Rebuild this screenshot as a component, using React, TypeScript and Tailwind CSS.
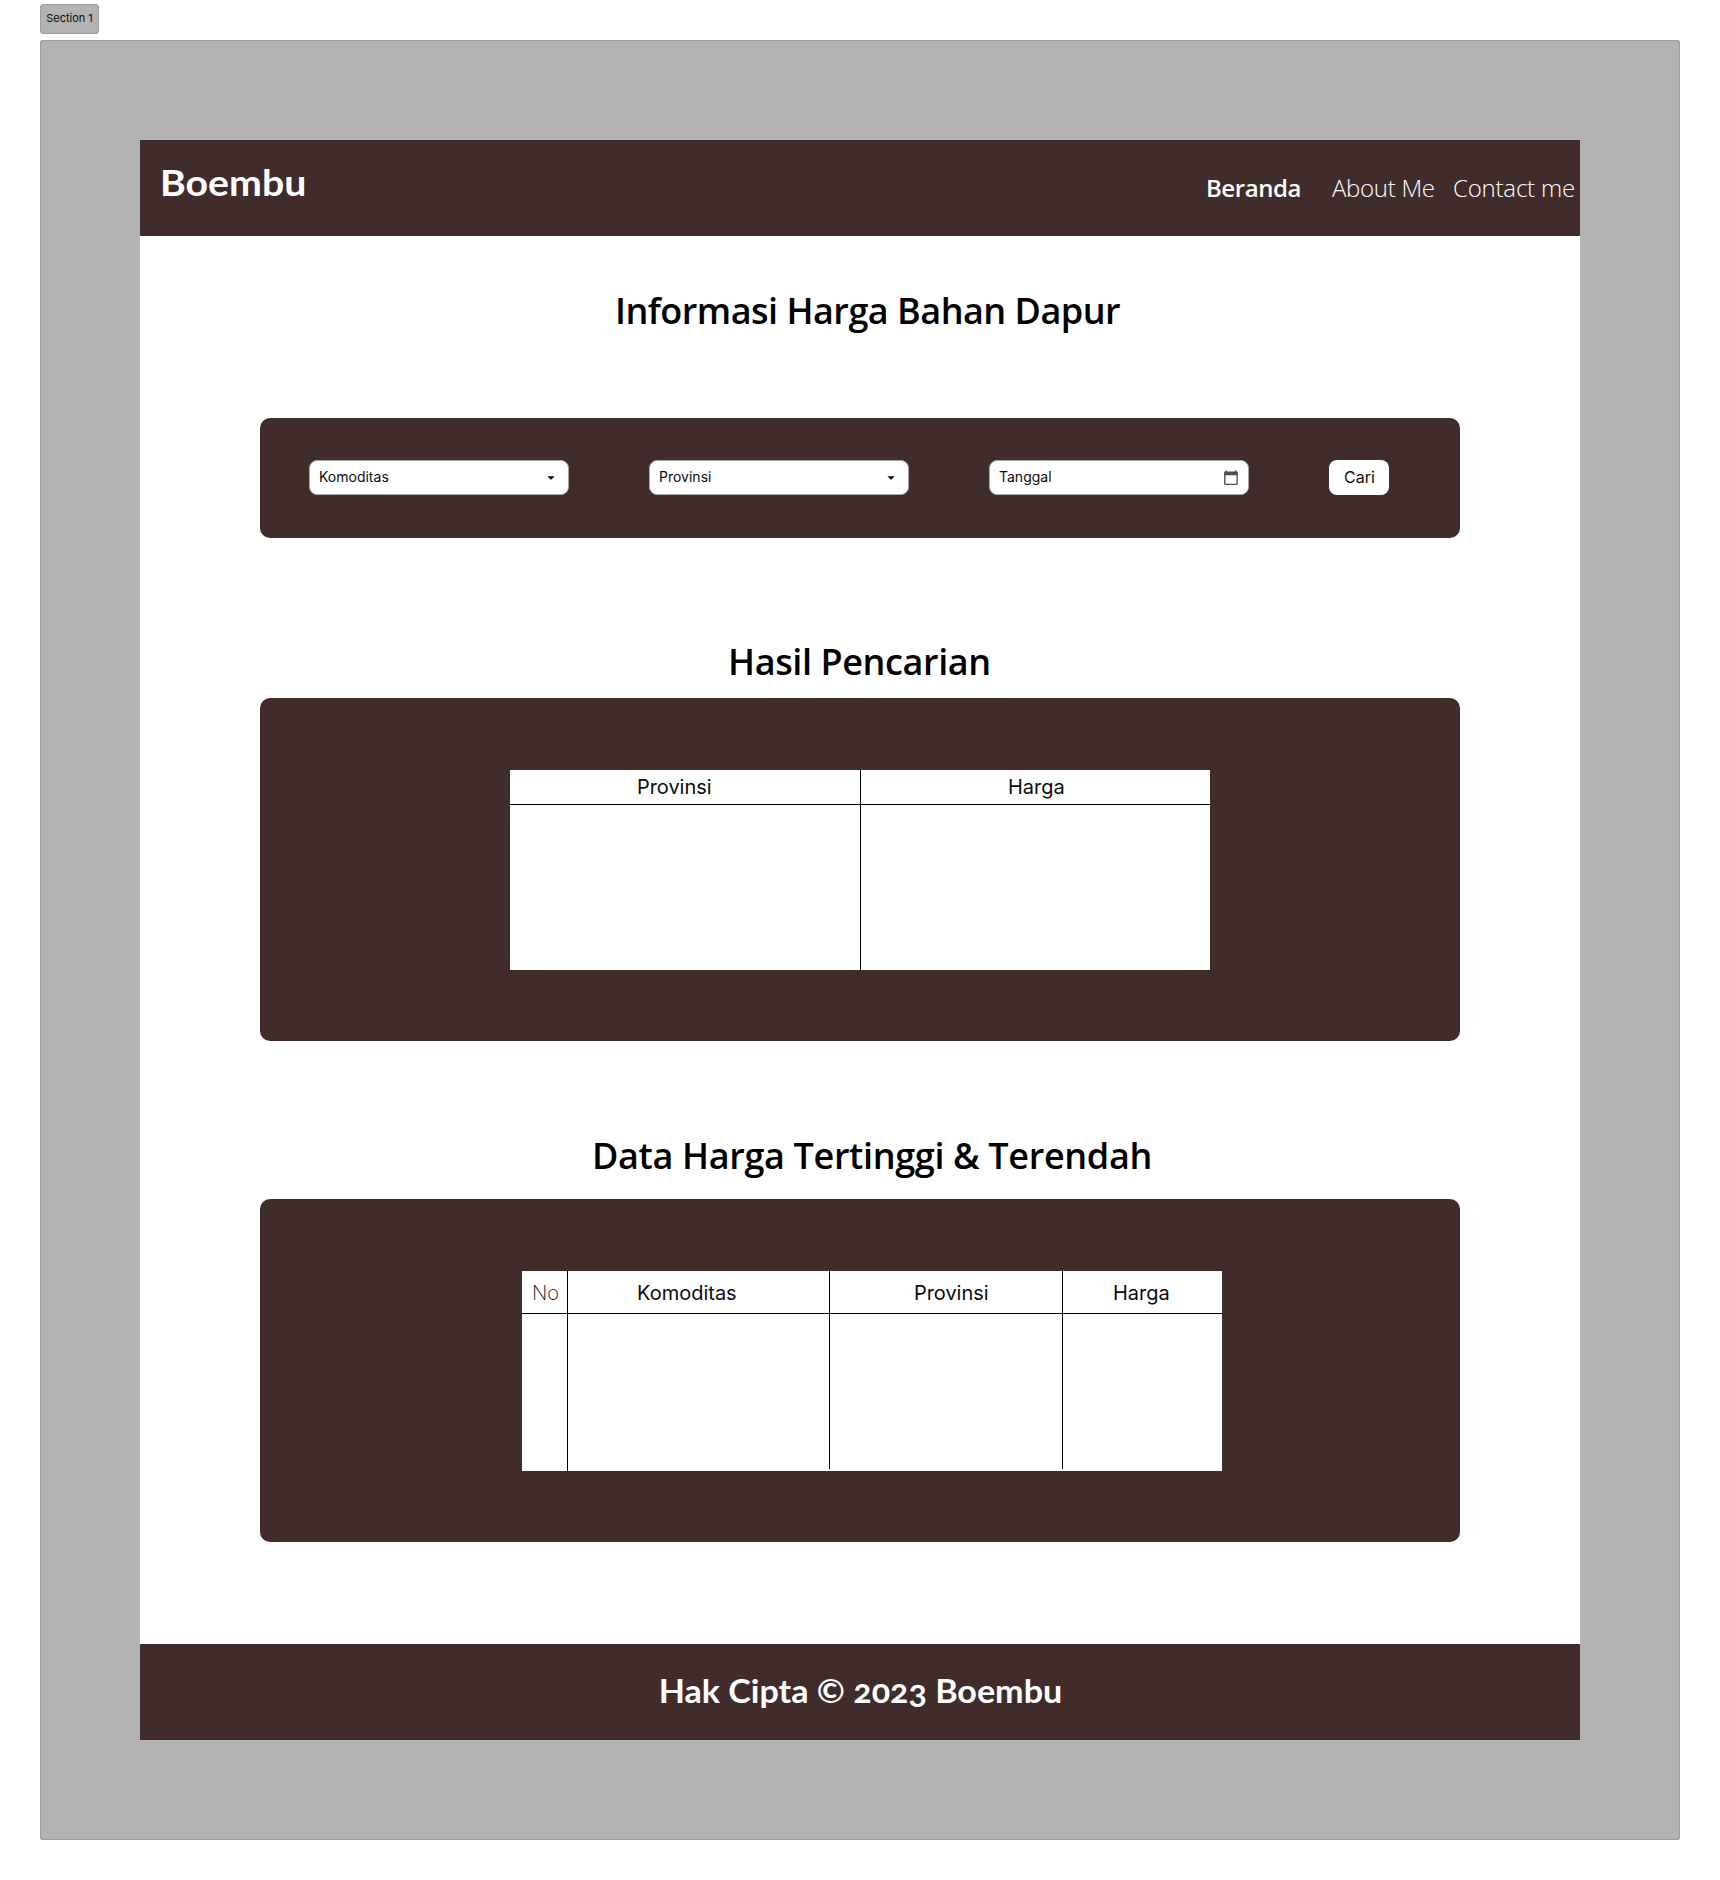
import type { ReactNode } from "react";

function Caret() {
  return (
    <svg viewBox="0 0 8 4" className="h-1 w-2" fill="#0b0b0b">
      <path d="M0.9 0.3h6.2c.2 0 .3.2.1.4L4.4 3.4a.6.6 0 0 1-.8 0L.8.7C.6.5.7.3.9.3z" />
    </svg>
  );
}

function CalendarIcon() {
  return (
    <svg viewBox="0 0 14 16" className="h-4 w-3.5" fill="#4b4f53">
      <path
        fillRule="evenodd"
        d="M1.5 0.4h1.6v1.1h7.8V0.4h1.6v1.1h.3c.6 0 1 .5 1 1.1v11.2c0 .7-.5 1.2-1.1 1.2H1.3c-.7 0-1.2-.5-1.2-1.2V2.600c0-.6.4-1.100 1-1.100h.4zM1.500 5.300v8.400h11V5.300z"
      />
    </svg>
  );
}

function Field({ label, icon, className }: { label: string; icon: ReactNode; className: string }) {
  return (
    <div
      className={`flex h-[35px] w-[260px] items-center justify-between rounded-lg border border-[#a9a9a9] bg-white text-sm text-[#0b0b0b] ${className}`}
    >
      <span className="pb-0.5 leading-[31px]">{label}</span>
      {icon}
    </div>
  );
}

function Heading({ children, className }: { children: ReactNode; className: string }) {
  return (
    <h2 className={`whitespace-nowrap font-['Open_Sans',sans-serif] text-4xl leading-[48px] font-semibold text-black ${className}`}>
      {children}
    </h2>
  );
}

function ResultTable() {
  return (
    <div className="ml-[250px] h-[200px] w-[700px] bg-white text-xl text-[#0b0b0b]">
      <div className="flex h-full">
        <div className="w-[351px] border-r border-black">
          <div className="h-[35px] border-b border-black pl-[127px] leading-[34px] tracking-[-0.05px]">Provinsi</div>
        </div>
        <div className="flex-1">
          <div className="h-[35px] border-b border-black pl-[147px] leading-[34px]">Harga</div>
        </div>
      </div>
    </div>
  );
}

function ExtremesTable() {
  return (
    <div className="relative ml-[262px] h-[200px] w-[700px] bg-white text-xl text-[#0b0b0b]">
      <div className="flex h-[43px] border-b border-black pt-px leading-[43px]">
        <span className="w-[46px] pl-2.5 font-extralight">No</span>
        <span className="w-[262px] pl-[69px]">Komoditas</span>
        <span className="w-[233px] pl-[84px] tracking-[-0.05px]">Provinsi</span>
        <span className="flex-1 pl-[50px]">Harga</span>
      </div>
      <div className="absolute top-0 left-[45px] h-[200px] w-px bg-black" />
      <div className="absolute -top-0.5 left-[307px] h-[200px] w-px bg-black" />
      <div className="absolute -top-0.5 left-[540px] h-[200px] w-px bg-black" />
    </div>
  );
}

export default function App() {
  return (
    <div className="h-[1880px] w-[1720px] bg-white px-10 pt-1 font-['Inter',sans-serif]">
      <div className="flex h-[30px] w-[59px] items-center justify-center rounded-[3px] border border-[#9e9e9e] bg-[#b3b3b3] pb-0.5 text-[11px] whitespace-nowrap text-[#0b0b0b]">
        Section 1
      </div>

      <div className="mt-1.5 h-[1800px] w-[1640px] rounded-[2px] border border-[#9e9e9e] bg-[#b3b3b3] px-[99px] pt-[99px]">
        <div className="flex h-[1600px] w-[1440px] flex-col bg-white">
          <header className="flex h-24 shrink-0 items-start justify-between bg-[#402c2b] text-white">
            <span className="mt-[22px] ml-[20px] origin-left scale-x-[1.09] font-['Lato',sans-serif] text-4xl leading-10 font-bold">
              Boembu
            </span>
            <nav className="mt-8 flex font-['Open_Sans',sans-serif] text-2xl leading-8 font-light whitespace-nowrap">
              <a className="w-[126px] font-semibold tracking-[-0.45px]">Beranda</a>
              <a className="w-[121px] tracking-[-0.3px]">About Me</a>
              <a className="w-[127px] tracking-[-0.2px]">Contact me</a>
            </nav>
          </header>

          <main className="flex flex-1 flex-col">
            <Heading className="mt-[51px] ml-[475px] tracking-[-0.51px]">Informasi Harga Bahan Dapur</Heading>
            <section className="mt-[83px] ml-[120px] flex h-[120px] w-[1200px] items-start rounded-[10px] bg-[#402c2b] pt-[42px] pl-[49px]">
              <Field label="Komoditas" icon={<Caret />} className="mr-20 pr-[13px] pl-[9px]" />
              <Field label="Provinsi" icon={<Caret />} className="mr-20 pr-[13px] pl-[9px]" />
              <Field label="Tanggal" icon={<CalendarIcon />} className="mr-20 pr-[10px] pl-[9px]" />
              <button className="h-[35px] w-[60px] rounded-lg bg-white pb-0.5 pl-px text-base text-[#0b0b0b]">Cari</button>
            </section>

            <Heading className="mt-[100px] ml-[588px] tracking-[-0.4px]">Hasil Pencarian</Heading>
            <section className="mt-3 ml-[120px] h-[343px] w-[1200px] rounded-[10px] bg-[#402c2b] pt-[72px]">
              <ResultTable />
            </section>

            <Heading className="mt-[91px] ml-[452px] tracking-[-0.35px]">Data Harga Tertinggi &amp; Terendah</Heading>
            <section className="mt-[19px] ml-[120px] h-[343px] w-[1200px] rounded-[10px] bg-[#402c2b] pt-[72px]">
              <ExtremesTable />
            </section>
          </main>

          <footer className="flex h-24 shrink-0 justify-center bg-[#402c2b] pt-[27px]">
            <p className="scale-x-[1.065] font-['Lato',sans-serif] text-[32px] leading-10 font-bold whitespace-nowrap text-white [font-feature-settings:'onum']">
              Hak Cipta © 2023 Boembu
            </p>
          </footer>
        </div>
      </div>
    </div>
  );
}
